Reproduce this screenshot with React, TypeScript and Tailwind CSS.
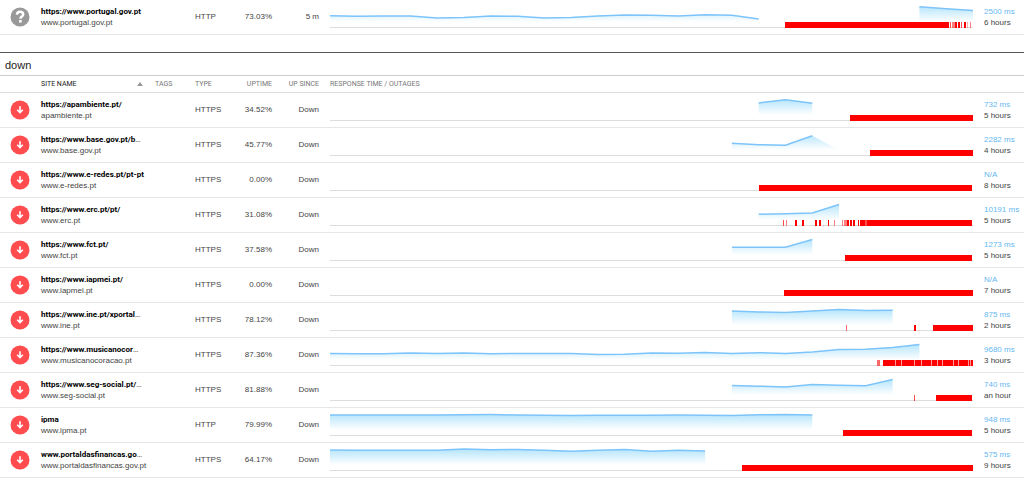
import React from 'react';

interface Series {
  start: number;
  values: number[];
  tail?: boolean;
}

interface Monitor {
  name: string;
  shortened?: boolean;
  host: string;
  type: string;
  uptime: string;
  since: string;
  response: string;
  outage: string;
  status: 'unknown' | 'down';
  series: Series[];
  outages: [number, number, number?][];
}

const STEP = 643 / 24;
const FLOOR = 22;

const unknownMonitors: Monitor[] = [
  {
    name: 'https://www.portugal.gov.pt',
    host: 'www.portugal.gov.pt',
    type: 'HTTP',
    uptime: '73.03%',
    since: '5 m',
    response: '2500 ms',
    outage: '6 hours',
    status: 'unknown',
    series: [
      { start: 0, values: [15.7, 16.3, 16, 16, 18, 17.5, 16, 16.3, 18, 17.5, 16, 15, 15.2, 16, 14.7, 15.2, 19] },
      { start: 22, values: [6.7, 8.7, 10.5] },
    ],
    outages: [[455, 619], [620, 621, 0.7], [622, 625, 0.5], [625, 627], [628, 630], [631, 632, 0.7], [634, 636], [637, 638, 0.3], [640, 641, 0.5]],
  },
];

const downMonitors: Monitor[] = [
  {
    name: 'https://apambiente.pt/',
    host: 'apambiente.pt',
    type: 'HTTPS',
    uptime: '34.52%',
    since: 'Down',
    response: '732 ms',
    outage: '5 hours',
    status: 'down',
    series: [{ start: 16, values: [10, 6.7, 10.3] }],
    outages: [[520, 643]],
  },
  {
    name: 'https://www.base.gov.pt/b',
    shortened: true,
    host: 'www.base.gov.pt',
    type: 'HTTPS',
    uptime: '45.77%',
    since: 'Down',
    response: '2282 ms',
    outage: '4 hours',
    status: 'down',
    series: [{ start: 15, values: [15.3, 16.7, 17.3, 7.8], tail: true }],
    outages: [[540, 643]],
  },
  {
    name: 'https://www.e-redes.pt/pt-pt',
    host: 'www.e-redes.pt',
    type: 'HTTPS',
    uptime: '0.00%',
    since: 'Down',
    response: 'N/A',
    outage: '8 hours',
    status: 'down',
    series: [],
    outages: [[429, 642]],
  },
  {
    name: 'https://www.erc.pt/pt/',
    host: 'www.erc.pt',
    type: 'HTTPS',
    uptime: '31.08%',
    since: 'Down',
    response: '10191 ms',
    outage: '5 hours',
    status: 'down',
    series: [{ start: 16, values: [16.2, 15.8, 14.9, 6.5] }],
    outages: [
      [453, 454, 0.7], [456, 457, 0.5], [465, 467], [472, 474], [485, 487], [489, 491], [498, 499], [504, 505, 0.5],
      [512, 513, 0.5], [514, 517, 0.5], [517, 519], [520, 522], [523, 525], [528, 529], [530, 535], [535, 537, 0.7], [537, 642],
    ],
  },
  {
    name: 'https://www.fct.pt/',
    host: 'www.fct.pt',
    type: 'HTTPS',
    uptime: '37.58%',
    since: 'Down',
    response: '1273 ms',
    outage: '5 hours',
    status: 'down',
    series: [{ start: 15, values: [14.3, 14.3, 14.3, 6.5] }],
    outages: [[515, 642]],
  },
  {
    name: 'https://www.iapmei.pt/',
    host: 'www.iapmei.pt',
    type: 'HTTPS',
    uptime: '0.00%',
    since: 'Down',
    response: 'N/A',
    outage: '7 hours',
    status: 'down',
    series: [],
    outages: [[454, 643]],
  },
  {
    name: 'https://www.ine.pt/xportal',
    shortened: true,
    host: 'www.ine.pt',
    type: 'HTTPS',
    uptime: '78.12%',
    since: 'Down',
    response: '875 ms',
    outage: '2 hours',
    status: 'down',
    series: [{ start: 15, values: [7.9, 9, 9.5, 8, 6.5, 7.4, 7.2] }],
    outages: [[516, 517, 0.6], [584, 586], [603, 643]],
  },
  {
    name: 'https://www.musicanocor',
    shortened: true,
    host: 'www.musicanocoracao.pt',
    type: 'HTTPS',
    uptime: '87.36%',
    since: 'Down',
    response: '9680 ms',
    outage: '3 hours',
    status: 'down',
    series: [
      {
        start: 0,
        values: [15.4, 15.7, 15.7, 15, 15.6, 14.9, 15.8, 15.5, 15.4, 15.4, 16.4, 16.2, 15, 15.2, 14.6, 15.5, 14.7, 15.4, 14, 11.5, 11.2, 9.5, 6.5],
      },
    ],
    outages: [
      [547, 550, 0.6], [553, 643, 0.4], [553, 565], [566, 571], [572, 584], [585, 591], [592, 601], [602, 607],
      [608, 612], [613, 623], [624, 628], [629, 638], [639, 640], [641, 643],
    ],
  },
  {
    name: 'https://www.seg-social.pt/',
    shortened: true,
    host: 'www.seg-social.pt',
    type: 'HTTPS',
    uptime: '81.88%',
    since: 'Down',
    response: '740 ms',
    outage: 'an hour',
    status: 'down',
    series: [{ start: 15, values: [12.4, 13.2, 13.9, 11.5, 12.2, 12.7, 6.5] }],
    outages: [[584, 585, 0.7], [606, 642]],
  },
  {
    name: 'ipma',
    host: 'www.ipma.pt',
    type: 'HTTP',
    uptime: '79.99%',
    since: 'Down',
    response: '948 ms',
    outage: '5 hours',
    status: 'down',
    series: [{ start: 0, values: [7, 7, 6.9, 7, 7, 6.7, 6.6, 7, 7.2, 7.5, 7.3, 7.3, 7.3, 7.1, 7.2, 7.4, 6.7, 6.4, 6.9] }],
    outages: [[513, 642]],
  },
  {
    name: 'www.portaldasfinancas.go',
    shortened: true,
    host: 'www.portaldasfinancas.gov.pt',
    type: 'HTTPS',
    uptime: '64.17%',
    since: 'Down',
    response: '575 ms',
    outage: '9 hours',
    status: 'down',
    series: [{ start: 0, values: [7, 7.2, 7.2, 7.2, 7.2, 6.1, 6.8, 6.5, 7.2, 8.2, 7.3, 6.4, 8.3, 7.3, 8] }],
    outages: [[412, 643]],
  },
];

const StatusIcon: React.FC<{ status: Monitor['status'] }> = ({ status }) =>
  status === 'unknown' ? (
    <svg viewBox="0 0 20 20" className="block size-5" role="img" aria-label="Unknown">
      <circle cx="10" cy="10" r="9.5" fill="#999" />
      <path d="M6.9 7.6C7.1 5.6 8.4 4.8 10 4.8c1.9 0 3.2 1 3.2 2.6 0 2.1-2.8 2.2-2.8 4.3" fill="none" stroke="#fff" strokeWidth="2.5" />
      <rect x="9.1" y="13" width="2.6" height="2.6" fill="#fff" />
    </svg>
  ) : (
    <svg viewBox="0 0 20 20" className="block size-5" role="img" aria-label="Down">
      <circle cx="10" cy="10" r="9.5" fill="#ff4d4f" />
      <path d="M10 6.2v6.4M7.2 9.8l2.8 2.8 2.8-2.8" fill="none" stroke="#fff" strokeWidth="1.6" />
    </svg>
  );

const Chart: React.FC<{ series: Series[]; outages: Monitor['outages'] }> = ({ series, outages }) => {
  const id = React.useId();
  return (
    <svg viewBox="0 0 643 28" preserveAspectRatio="none" className="block h-7 w-full">
      <defs>
        <linearGradient id={id} gradientUnits="userSpaceOnUse" x1="0" y1="6" x2="0" y2={FLOOR}>
          <stop offset="0" stopColor="#b5e5fb" />
          <stop offset="1" stopColor="#ffffff" />
        </linearGradient>
      </defs>
      <rect x="0" y="27" width="643" height="1" fill="#dddddd" />
      {series.map(({ start, values, tail }) => {
        const line = values.map((v, i) => `${((start + i) * STEP).toFixed(1)},${v}`).join(' ');
        const end = start + values.length - (tail ? 0 : 1);
        return (
          <g key={start}>
            <polygon points={`${start * STEP},${FLOOR} ${line} ${end * STEP},${FLOOR}`} fill={`url(#${id})`} />
            <polyline points={line} fill="none" stroke="#7cc4fa" strokeWidth="1.5" />
          </g>
        );
      })}
      {outages.map(([from, to, opacity], i) => (
        <rect key={i} x={from} y="22" width={to - from} height="6" fill="#ff0000" opacity={opacity ?? 1} />
      ))}
    </svg>
  );
};

const Columns = () => (
  <colgroup>
    <col className="w-10" />
    <col className="w-[115px]" />
    <col className="w-10" />
    <col className="w-10" />
    <col className="w-[37px]" />
    <col className="w-[47px]" />
    <col />
    <col className="w-[51px]" />
  </colgroup>
);

const MonitorRow: React.FC<{ monitor: Monitor }> = ({ monitor }) => (
  <tr className="h-[35px] text-[#444] [&>td]:border-b [&>td]:border-[#e6e6e6]">
    <td className="pl-[10px]">
      <StatusIcon status={monitor.status} />
    </td>
    <td className="pl-px leading-[11px] whitespace-nowrap">
      <a href="#" className="block font-[Roboto,'Liberation_Sans',sans-serif]">
        <span className="font-bold text-black">{monitor.name}</span>
        {monitor.shortened && '…'}
      </a>
      <div>{monitor.host}</div>
    </td>
    <td />
    <td>{monitor.type}</td>
    <td className="text-right whitespace-nowrap">{monitor.uptime}</td>
    <td className="text-right">{monitor.since}</td>
    <td className="pl-[11px] align-top">
      <Chart series={monitor.series} outages={monitor.outages} />
    </td>
    <td className="pl-[11px] leading-[11px] whitespace-nowrap">
      <div className="text-[#66b8f0]">{monitor.response}</div>
      <div>{monitor.outage}</div>
    </td>
  </tr>
);

export default function App() {
  return (
    <main className="bg-white font-['Liberation_Sans',Arial,sans-serif] text-[8px] text-[#444]">
      <table className="w-full table-fixed border-separate border-spacing-0">
        <Columns />
        <tbody>
          {unknownMonitors.map((m) => (
            <MonitorRow key={m.name} monitor={m} />
          ))}
        </tbody>
      </table>

      <section className="mt-[17px] border-t border-[#555]">
        <h2 className="h-[23px] border-b border-[#ccc] pl-[5px] text-[11px] leading-6 text-[#222]">down</h2>
        <table className="w-full table-fixed border-separate border-spacing-0">
          <Columns />
          <thead className="font-[Roboto,'Liberation_Sans',sans-serif]">
            <tr className="h-[17px] text-left text-[7px] text-[#777] [&>th]:border-b [&>th]:border-[#ddd]">
              <th />
              <th className="pr-3 pl-px font-normal text-[#222]">
                <button type="button" className="flex w-full items-center justify-between">
                  SITE NAME
                  <svg viewBox="0 0 6 4" className="h-1 w-[6px]">
                    <path d="M3 0l3 4H0z" fill="#999" />
                  </svg>
                </button>
              </th>
              <th className="font-normal">TAGS</th>
              <th className="font-normal">TYPE</th>
              <th className="text-right font-normal">UPTIME</th>
              <th className="text-right font-normal whitespace-nowrap">UP SINCE</th>
              <th className="pl-[11px] font-normal">RESPONSE TIME / OUTAGES</th>
              <th />
            </tr>
          </thead>
          <tbody>
            {downMonitors.map((m) => (
              <MonitorRow key={m.name} monitor={m} />
            ))}
          </tbody>
        </table>
      </section>
    </main>
  );
}
